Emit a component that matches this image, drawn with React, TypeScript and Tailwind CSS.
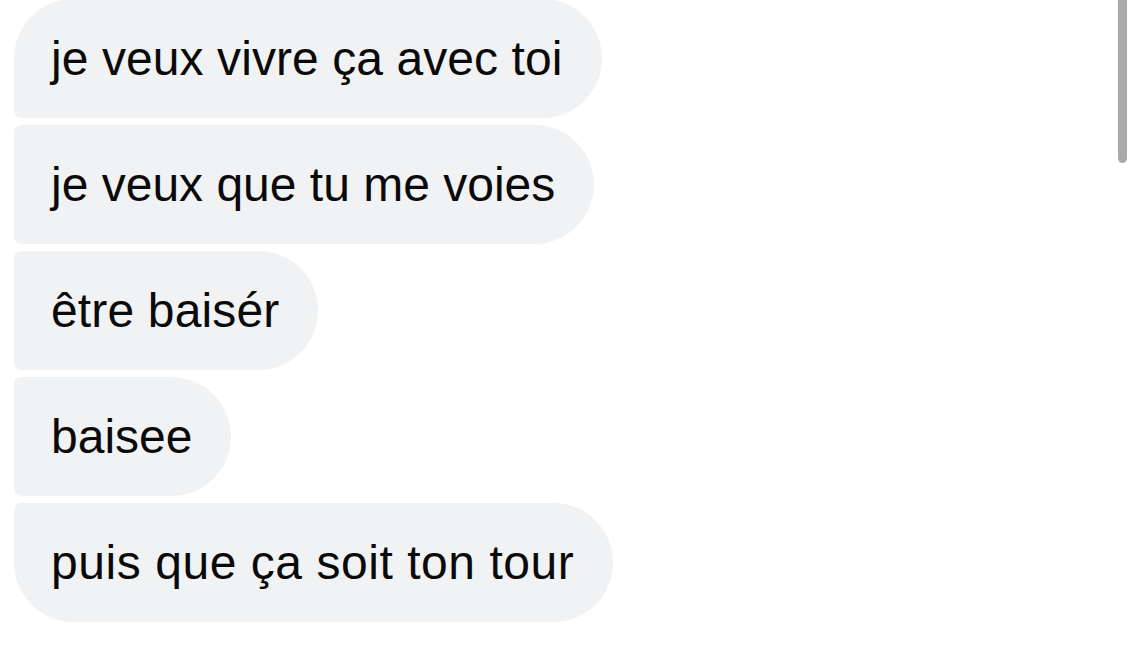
import React from "react";

const messages = [
  { text: "je veux vivre ça avec toi", extra: "tracking-[0.08px]" },
  { text: "je veux que tu me voies", extra: "" },
  { text: "être baisér", extra: "tracking-[0.15px]" },
  { text: "baisee", extra: "" },
  { text: "puis que ça soit ton tour", extra: "tracking-[0.55px]" },
];

export default function App() {
  return (
    <div
      className="relative w-[1136px] h-[651px] overflow-hidden bg-white"
      style={{ fontFamily: '"Liberation Sans", Arial, sans-serif' }}
    >
      <div className="flex flex-col items-start gap-[7px] pl-[14px] mt-[-1px]">
        {messages.map((m, i) => {
          const first = i === 0;
          const last = i === messages.length - 1;
          return (
            <div
              key={i}
              className={
                "bg-[#f1f2f4] text-[#0a0a0a] text-[48px] leading-[55px] pl-[37px] pr-[39px] py-[32px] whitespace-nowrap rounded-r-[60px] " +
                (first ? "rounded-tl-[60px] " : "rounded-tl-[7px] ") +
                (last ? "rounded-bl-[60px] " : "rounded-bl-[7px] ") +
                m.extra
              }
            >
              {m.text}
            </div>
          );
        })}
      </div>
      <div className="absolute left-[1118px] top-0 w-[9px] h-[163px] rounded-b-full bg-[#a9a9a9]" />
    </div>
  );
}
